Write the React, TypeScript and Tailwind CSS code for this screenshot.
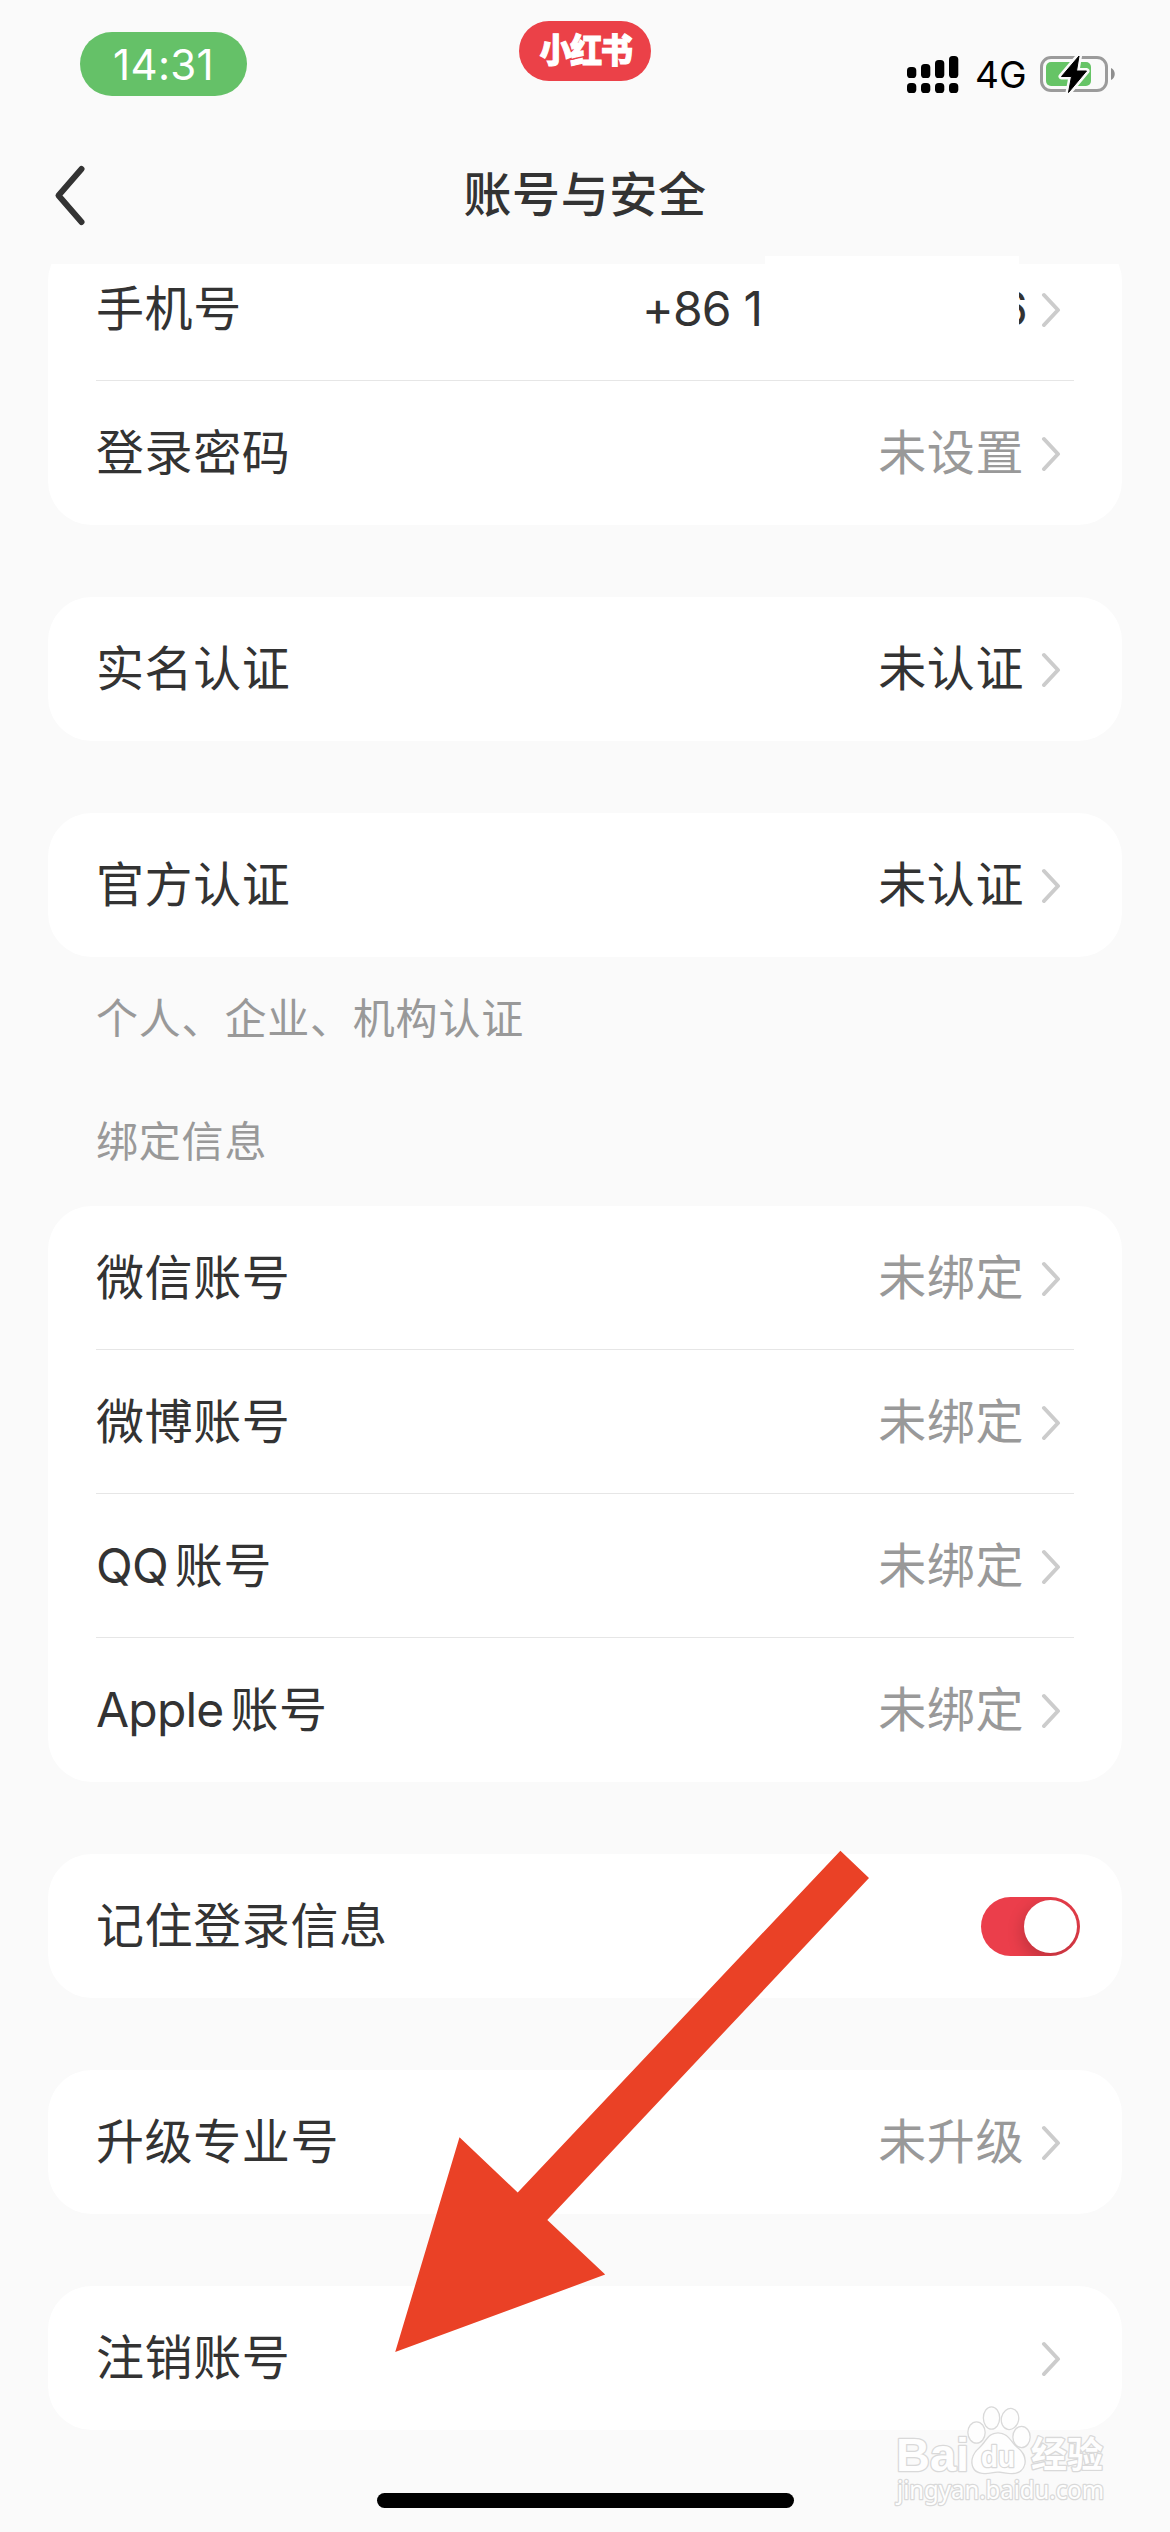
import React from "react";

type RowData = {
  label: string;
  latin?: string;
  value?: string;
  dark?: boolean;
  toggle?: boolean;
  phone?: boolean;
};

function Chevron() {
  return (
    <svg className="ml-[16px] h-[36px] w-[22px] shrink-0" viewBox="0 0 22 36" fill="none">
      <path d="M4 4 L18 19 L4 34" stroke="#cccccc" strokeWidth="4" strokeLinecap="round" strokeLinejoin="round" />
    </svg>
  );
}

function Toggle() {
  return (
    <div className="-mr-[6px] flex h-[59px] w-[99px] items-center justify-end overflow-hidden rounded-full bg-[#eb3e4b] pr-[3px]">
      <div className="size-[53px] rounded-full bg-white shadow-[0_6px_16px_2px_rgba(0,0,0,0.18)]" />
    </div>
  );
}

function PhoneValue() {
  return (
    <div className="relative flex w-[382px] justify-between tracking-[-0.8px]">
      <span className="whitespace-pre">+86 1</span>
      <span className="-mr-[3px]">6</span>
      <div className="absolute -top-[17px] right-[5px] h-[90px] w-[254px] bg-white" />
    </div>
  );
}

function Row({ row, last }: { row: RowData; last: boolean }) {
  return (
    <div
      className={`ml-[48px] mr-[48px] flex h-[144px] items-center justify-between ${
        last ? "" : "border-b border-[#e6e6e6]"
      }`}
    >
      <span className="text-[#333333]">
        {row.latin && <span className="mr-[7px] tracking-[-0.8px]">{row.latin}</span>}
        {row.label}
      </span>
      <div className={`flex items-center ${row.dark ? "text-[#333333]" : "text-[#999999]"} ${row.toggle ? "" : "pr-[12px]"}`}>
        {row.phone && <PhoneValue />}
        {row.value && <span>{row.value}</span>}
        {row.toggle ? <Toggle /> : <Chevron />}
      </div>
    </div>
  );
}

function Card({ rows, className = "" }: { rows: RowData[]; className?: string }) {
  return (
    <section className={`mx-[48px] rounded-[44px] bg-white text-[48px] leading-[56px] tracking-[0.6px] ${className}`}>
      {rows.map((r, i) => (
        <Row key={i} row={r} last={i === rows.length - 1} />
      ))}
    </section>
  );
}

function Signal() {
  const heights = [11, 14, 18, 22];
  return (
    <svg className="h-[40px] w-[52px]" viewBox="0 0 52 40">
      {heights.map((h, i) => (
        <g key={h}>
          <rect x={i * 14} y={24 - h} width="9.3" height={h} rx="3.6" />
          <rect x={i * 14} y="29" width="9.3" height="10" rx="3.6" />
        </g>
      ))}
    </svg>
  );
}

function Battery() {
  return (
    <svg className="h-[40px] w-[78px]" viewBox="0 0 78 40">
      <rect x="1.5" y="3.5" width="65" height="33" rx="9.5" fill="none" stroke="#9b9b9b" strokeWidth="3" />
      <path d="M71 14 C76 16 76 24 71 26 Z" fill="#8e8e8e" />
      <rect x="6" y="8" width="45" height="24" rx="5" fill="#66c466" />
      <path d="M39 2 L21.500 22.500 H31.500 L28.500 38.500 L46.500 17 H36.500 Z" fill="#fafafa" stroke="#fafafa" strokeWidth="6" strokeLinejoin="round" />
      <path d="M39 2 L21.500 22.500 H31.500 L28.500 38.500 L46.500 17 H36.500 Z" fill="#000" stroke="#000" strokeWidth="1" strokeLinejoin="round" />
    </svg>
  );
}

function StatusBar() {
  return (
    <header className="flex h-[135px] items-start">
      <div className="ml-[80px] mt-[32px] flex h-[64px] w-[167px] items-center justify-center rounded-[32px] bg-[#65c168] text-[42px] tracking-[0.3px] text-white">
        14:31
      </div>
      <div className="ml-[272px] mt-[21px] flex h-[60px] w-[132px] items-center justify-center rounded-[30px] bg-[#eb4148] text-white">
        <span className="-mr-[1px] scale-y-[1.06] text-[32px] font-black leading-none tracking-[-1.5px] [-webkit-text-stroke:1px_white]">
          小红书
        </span>
      </div>
      <div className="ml-[256px] mt-[54px] flex h-[40px] items-center">
        <Signal />
        <span className="ml-[16px] w-[49px] text-[37px] leading-none">4G</span>
        <span className="ml-[16px] flex">
          <Battery />
        </span>
      </div>
    </header>
  );
}

function TitleBar() {
  return (
    <div className="relative flex h-[129px] items-start justify-center">
      <svg className="absolute left-[52px] top-[28px] h-[66px] w-[36px]" viewBox="0 0 36 66" fill="none">
        <path d="M29.500 6 L6.500 32.500 L29.500 59" stroke="#333333" strokeWidth="6" strokeLinecap="round" strokeLinejoin="round" />
      </svg>
      <h1 className="mt-[32px] text-[48px] font-medium leading-[56px] tracking-[0.6px] text-[#333333]">账号与安全</h1>
    </div>
  );
}

function Arrow() {
  return (
    <svg className="absolute left-[395px] top-[1850px] h-[503px] w-[475px]" viewBox="395 1850 475 503">
      <path
        d="M840.400 1850.700 L869 1878 L547.300 2220 L605.200 2274.600 L395.200 2352.100 L459.500 2137.200 L517.700 2192.500 Z"
        fill="#ea4126"
      />
    </svg>
  );
}

function Watermark() {
  return (
    <svg
      className="absolute left-[890px] top-[2400px] h-[115px] w-[225px]"
      viewBox="890 2400 225 115"
      fill="#fefefe"
      stroke="#d9d9d9"
      strokeWidth="2.600"
      paintOrder="stroke"
      strokeLinejoin="round"
    >
      <text x="896" y="2471" fontSize="47" fontWeight="700" textLength="73" lengthAdjust="spacingAndGlyphs" fontFamily="Liberation Sans, sans-serif">
        Bai
      </text>
      <ellipse cx="976.500" cy="2432.500" rx="8" ry="10" />
      <ellipse cx="991.500" cy="2418" rx="7.500" ry="10.500" />
      <ellipse cx="1010" cy="2419" rx="8" ry="10" transform="rotate(12 1010 2419)" />
      <ellipse cx="1021.500" cy="2437" rx="8" ry="10" />
      <path d="M998 2433.500 C1008 2433.500 1010 2442 1017 2448 C1029 2457 1026 2473 1012 2473 C1006 2473 1003 2471.500 998 2471.500 C993 2471.500 990 2473 985 2473 C969 2473 970 2456 979 2449 C987 2442 988 2433.500 998 2433.500 Z" />
      <text x="981" y="2467" fontSize="30" fontWeight="700" textLength="34" lengthAdjust="spacingAndGlyphs" fontFamily="Liberation Sans, sans-serif">
        du
      </text>
      <text x="1031" y="2468" fontSize="36" fontWeight="700" textLength="72" fontFamily="Noto Sans CJK SC, sans-serif">
        经验
      </text>
      <text x="897" y="2499" fontSize="25" textLength="207" lengthAdjust="spacingAndGlyphs" fontFamily="Noto Sans, sans-serif">
        jingyan.baidu.com
      </text>
    </svg>
  );
}

export default function App() {
  return (
    <div className="relative flex h-[2532px] w-[1170px] flex-col overflow-hidden bg-[#fafafa] font-['Inter','Noto_Sans_CJK_SC',sans-serif] text-black">
      <div className="relative z-10">
        <StatusBar />
        <TitleBar />
      </div>
      <main className="flex flex-col">
        <div className="relative">
          <div className="absolute left-[765px] -top-[8px] z-20 h-[20px] w-[254px] bg-white" />
          <div className="overflow-hidden">
            <Card
              className="-mt-[27px]"
              rows={[
                { label: "手机号", phone: true, dark: true },
                { label: "登录密码", value: "未设置" },
              ]}
            />
          </div>
        </div>
        <Card className="mt-[72px]" rows={[{ label: "实名认证", value: "未认证", dark: true }]} />
        <Card className="mt-[72px]" rows={[{ label: "官方认证", value: "未认证", dark: true }]} />
        <p className="ml-[96px] mt-[37px] text-[42px] leading-[50px] tracking-[0.8px] text-[#999999]">个人、企业、机构认证</p>
        <h2 className="ml-[96px] mt-[73px] text-[42px] leading-[50px] tracking-[0.8px] text-[#999999]">绑定信息</h2>
        <Card
          className="mt-[39px]"
          rows={[
            { label: "微信账号", value: "未绑定" },
            { label: "微博账号", value: "未绑定" },
            { latin: "QQ", label: "账号", value: "未绑定" },
            { latin: "Apple", label: "账号", value: "未绑定" },
          ]}
        />
        <Card className="mt-[72px]" rows={[{ label: "记住登录信息", toggle: true }]} />
        <Card className="mt-[72px]" rows={[{ label: "升级专业号", value: "未升级" }]} />
        <Card className="mt-[72px]" rows={[{ label: "注销账号" }]} />
      </main>
      <div className="mx-auto mt-[63px] h-[15px] w-[417px] shrink-0 rounded-full bg-black" />
      <Arrow />
      <Watermark />
    </div>
  );
}
